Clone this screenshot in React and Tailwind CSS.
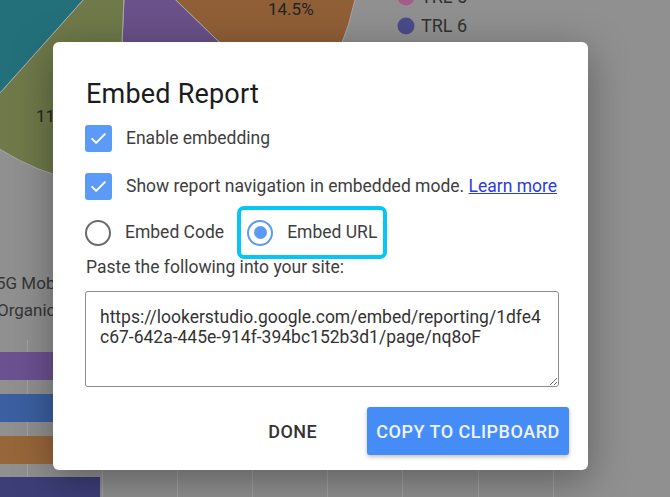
import React from "react";

const CX = 126;
const CY = -48;
const R = 234;

const pt = (deg) => {
    const a = (deg * Math.PI) / 180;
    return [CX + R * Math.cos(a), CY + R * Math.sin(a)];
};

const slice = (a1, a2) => {
    const [x1, y1] = pt(a1);
    const [x2, y2] = pt(a2);
    const large = a2 - a1 > 180 ? 1 : 0;
    return `M${CX} ${CY} L${x1} ${y1} A${R} ${R} 0 ${large} 1 ${x2} ${y2} Z`;
};

const slices = [
    { from: -60, to: -8, color: "#5b6f8f" },
    { from: -8, to: 44, color: "#905f37" },
    { from: 44, to: 92.5, color: "#6a5189" },
    { from: 92.5, to: 131.8, color: "#6f7949" },
    { from: 131.8, to: 240, color: "#23707b" },
];

const gridX = [27, 102, 177, 252, 327, 402, 478, 553];

const bars = [
    { y: 352, w: 300, color: "#6b5190" },
    { y: 394, w: 280, color: "#3b5fa0" },
    { y: 436, w: 260, color: "#97663a" },
    { y: 477, w: 100, color: "#3d3e78" },
];

const Dashboard = () => (
    <svg className="absolute inset-0" width="670" height="497" viewBox="0 0 670 497">
        {slices.map((s) => (
            <path key={s.from} d={slice(s.from, s.to)} fill={s.color} stroke="#a9a9a9" strokeWidth="1" />
        ))}
        <text x="268" y="15" fontSize="17" fill="#242424" fontFamily="Roboto, sans-serif">14.5%</text>
        <text x="36" y="122" fontSize="17" fill="#242424" fontFamily="Roboto, sans-serif">11.2%</text>

        <circle cx="406" cy="-3" r="8.5" fill="#a35b8b" />
        <text x="421" y="3" fontSize="18" fill="#303030" fontFamily="Roboto, sans-serif">TRL 5</text>
        <circle cx="406" cy="26" r="8.5" fill="#4b4a8c" />
        <text x="421" y="32" fontSize="18" fill="#303030" fontFamily="Roboto, sans-serif">TRL 6</text>

        <text x="-4" y="289" fontSize="17" fill="#353535" fontFamily="Roboto, sans-serif">5G Mobile</text>
        <text x="-3" y="316" fontSize="17" fill="#353535" fontFamily="Roboto, sans-serif">Organic Search</text>

        {gridX.map((x) => (
            <line key={x} x1={x + 0.5} y1="340" x2={x + 0.5} y2="497" stroke="#a2a2a2" strokeWidth="1" />
        ))}
        {bars.map((b) => (
            <rect key={b.y} x="0" y={b.y} width={b.w} height="28" fill={b.color} />
        ))}
    </svg>
);

const Checkbox = () => (
    <div className="w-[27px] h-[27px] rounded-[3px] bg-[#5b9af7] flex items-center justify-center shrink-0">
        <svg width="19" height="19" viewBox="0 0 24 24" fill="none">
            <path d="M4 12.5l5 5L20 6.5" stroke="white" strokeWidth="2.6" strokeLinecap="round" strokeLinejoin="round" />
        </svg>
    </div>
);

const Radio = ({ checked }) => (
    <div
        className={`w-[26px] h-[26px] rounded-full border-2 flex items-center justify-center shrink-0 ${
            checked ? "border-[#5b9af7]" : "border-[#6b6b6b]"
        }`}
    >
        {checked && <div className="w-[13px] h-[13px] rounded-full bg-[#5b9af7]" />}
    </div>
);

export default function App() {
    return (
        <div
            className="relative w-[670px] h-[497px] overflow-hidden bg-[#909090]"
            style={{ fontFamily: "Roboto, 'Noto Sans', sans-serif" }}
        >
            <Dashboard />

            <div className="absolute left-[53px] top-[42px] w-[535px] h-[428px] bg-white rounded-[6px] shadow-[0_10px_40px_rgba(0,0,0,0.35)] pt-[36px] pl-[32px] pr-[19px] pb-[15px] flex flex-col">
                <h2 className="text-[27px] leading-[32px] font-normal tracking-[0.2px] text-[#1c1c1c] pl-[1px]">
                    Embed Report
                </h2>

                <div className="mt-[15px] h-[27px] flex items-center">
                    <Checkbox />
                    <span className="ml-[14px] text-[17.5px] text-[#3e3e3e]">Enable embedding</span>
                </div>

                <div className="mt-[21px] h-[27px] flex items-center">
                    <Checkbox />
                    <span className="ml-[14px] text-[17.5px] text-[#3e3e3e]">
                        Show report navigation in embedded mode.{" "}
                        <a href="#" className="text-[#2c3bdc] underline">Learn more</a>
                    </span>
                </div>

                <div className="mt-[6px] h-[53px] flex items-center">
                    <Radio />
                    <span className="ml-[14px] text-[17.5px] text-[#3e3e3e]">Embed Code</span>
                    <div className="ml-[13px] h-[53px] flex items-center border-[4px] border-[#08c6f3] rounded-[7px] pl-[6px] pr-[6px]">
                        <Radio checked />
                        <span className="ml-[14px] text-[17.5px] text-[#3e3e3e]">Embed URL</span>
                    </div>
                </div>

                <p className="-mt-[2px] text-[17.5px] leading-[20px] text-[#3e3e3e] pl-[1px]">
                    Paste the following into your site:
                </p>

                <textarea
                    readOnly
                    defaultValue="https://lookerstudio.google.com/embed/reporting/1dfe4c67-642a-445e-914f-394bc152b3d1/page/nq8oF"
                    className="mt-[14px] w-[474px] h-[96px] border border-[#8d8d8d] rounded-[3px] pt-[15px] pl-[14px] pr-[12px] text-[17.5px] leading-[20px] text-[#333] outline-none"
                />

                <div className="mt-[20px] h-[48px] flex items-center justify-end gap-[34px]">
                    <button className="h-[48px] px-[16px] text-[18px] font-medium text-[#333] tracking-[0.4px]">
                        DONE
                    </button>
                    <button className="w-[202px] h-[48px] rounded-[3px] bg-[#468cf7] text-[18px] font-medium text-[#eef4ff] tracking-[0.5px] shadow-[0_2px_4px_rgba(0,0,0,0.25)]">
                        COPY TO CLIPBOARD
                    </button>
                </div>
            </div>
        </div>
    );
}
